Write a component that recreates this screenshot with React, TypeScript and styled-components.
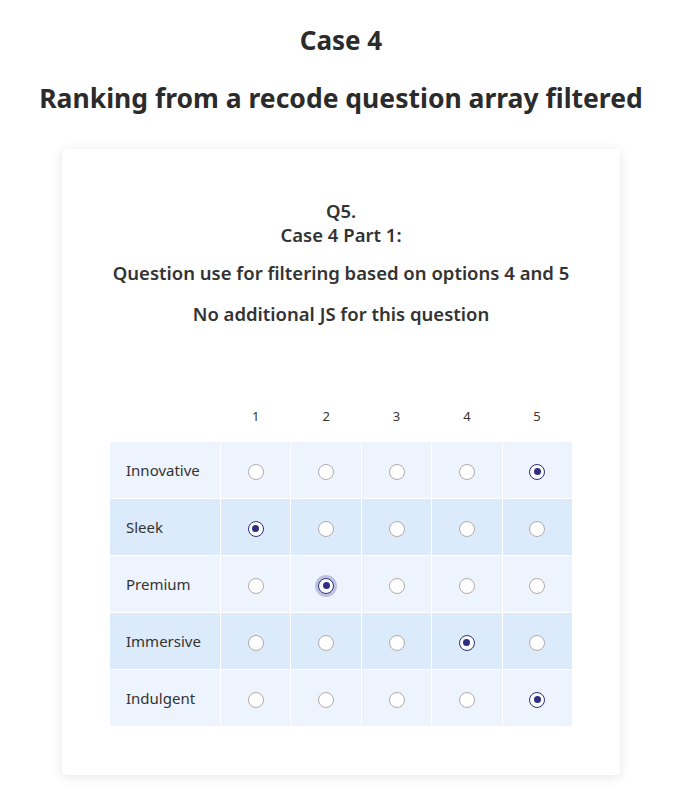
import styled, { createGlobalStyle } from 'styled-components';

const GlobalStyle = createGlobalStyle`
  body {
    margin: 0;
    background: #fff;
    font-family: "Noto Sans", "Open Sans", sans-serif;
    color: #333;
  }
`;

const Page = styled.main`
  width: 682px;
  padding: 18px 0 16px;
  display: flex;
  flex-direction: column;
  align-items: center;
`;

const Title = styled.h1`
  margin: 0;
  font-size: 26px;
  font-weight: 700;
  line-height: 44px;
  color: #2b2b2b;
`;

const Subtitle = styled.h2`
  margin: 14px 0 0;
  font-size: 26.5px;
  font-weight: 700;
  line-height: 44px;
  color: #2b2b2b;
`;

const Card = styled.section`
  margin-top: 29px;
  width: 558px;
  box-sizing: border-box;
  padding: 50px 48px 48px;
  background: #fff;
  border-radius: 4px;
  box-shadow: 0 2px 12px rgba(0, 0, 0, 0.1);
`;

const QuestionBlock = styled.div`
  text-align: center;
  font-size: 18.5px;
  font-weight: 600;
  color: #333;
`;

const QuestionLine = styled.div<{ $gap?: number }>`
  line-height: 24px;
  margin-top: ${p => p.$gap ?? 0}px;
`;

const Grid = styled.table`
  margin-top: 51px;
  width: 462px;
  border-collapse: collapse;
  font-size: 14px;
`;

const HeadCell = styled.th`
  height: 48px;
  font-weight: 400;
  font-size: 13px;
  color: #333;
  text-align: center;
  vertical-align: bottom;
  padding: 0 0 16px;
`;

const Row = styled.tr<{ $alt: boolean }>`
  background: ${p => (p.$alt ? '#dcebfc' : '#eef4fe')};
`;

const Label = styled.td`
  width: 95px;
  height: 56px;
  padding: 0 0 0 16px;
  border: 1px solid #fff;
  border-left: none;
  font-size: 15px;
  color: #333;
`;

const Cell = styled.td`
  width: 70px;
  border: 1px solid #fff;
  text-align: center;
  &:last-child {
    border-right: none;
  }
`;

const Radio = styled.span<{ $on: boolean; $focus?: boolean }>`
  display: inline-block;
  vertical-align: middle;
  width: 16px;
  height: 16px;
  box-sizing: border-box;
  border-radius: 50%;
  background: #fff;
  border: 1px solid ${p => (p.$on ? '#2d2f7f' : '#b3aaa8')};
  position: relative;
  box-shadow: ${p => (p.$focus ? '0 0 0 3px rgba(45, 47, 127, 0.25)' : 'none')};
  &::after {
    content: '';
    display: ${p => (p.$on ? 'block' : 'none')};
    position: absolute;
    left: 3.5px;
    top: 3.5px;
    width: 7px;
    height: 7px;
    border-radius: 50%;
    background: #2d2f7f;
  }
`;

const rows = [
  { label: 'Innovative', value: 5 },
  { label: 'Sleek', value: 1 },
  { label: 'Premium', value: 2, focus: true },
  { label: 'Immersive', value: 4 },
  { label: 'Indulgent', value: 5 },
];

const cols = [1, 2, 3, 4, 5];

export default function App() {
  return (
    <>
      <GlobalStyle />
      <Page>
        <Title>Case 4</Title>
        <Subtitle>Ranking from a recode question array filtered</Subtitle>
        <Card>
          <QuestionBlock>
            <QuestionLine>Q5.</QuestionLine>
            <QuestionLine>Case 4 Part 1:</QuestionLine>
            <QuestionLine $gap={14}>Question use for filtering based on options 4 and 5</QuestionLine>
            <QuestionLine $gap={17}>No additional JS for this question</QuestionLine>
          </QuestionBlock>
          <Grid>
            <thead>
              <tr>
                <HeadCell />
                {cols.map(c => (
                  <HeadCell key={c}>{c}</HeadCell>
                ))}
              </tr>
            </thead>
            <tbody>
              {rows.map((r, i) => (
                <Row key={r.label} $alt={i % 2 === 1}>
                  <Label>{r.label}</Label>
                  {cols.map(c => (
                    <Cell key={c}>
                      <Radio $on={r.value === c} $focus={r.focus && r.value === c} />
                    </Cell>
                  ))}
                </Row>
              ))}
            </tbody>
          </Grid>
        </Card>
      </Page>
    </>
  );
}
